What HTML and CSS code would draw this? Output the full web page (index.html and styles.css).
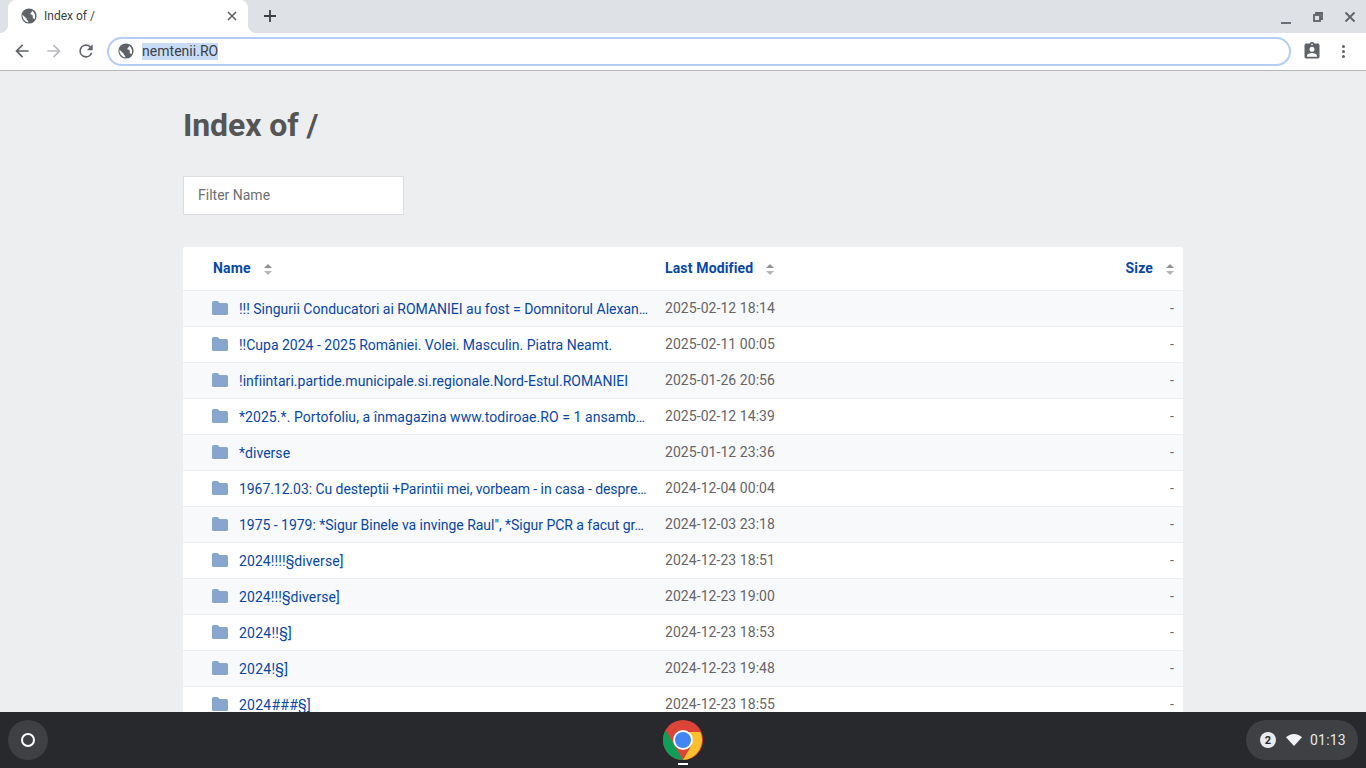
FILE: index.html
```html
<!DOCTYPE html>
<html lang="en">
<head>
<meta charset="utf-8">
<title>Index of /</title>
<link rel="stylesheet" href="styles.css">
</head>
<body>
<div class="browser">
  <div class="tabstrip">
    <div class="tab">
      <svg class="favicon" viewBox="1.500 1.500 21 21"><path fill-rule="evenodd" d="M12 2a10 10 0 1 0 0 20 10 10 0 0 0 0-20zM3.500 10.500L9 15.500V17l2 1.500v2A9 9 0 0 1 3.500 10.500zM16 5a9 9 0 0 1 3 11.500c-.5-1-1-1.500-2-1.500v-3c0-1-1-2-2-2h-1V8c1 0 2-1.500 2-3z"/></svg>
      <span class="tab-title">Index of /</span>
      <svg class="tab-close" viewBox="0 0 10 10"><path d="M1 1l8 8M9 1l-8 8"/></svg>
    </div>
    <svg class="new-tab" viewBox="0 0 12 12"><path d="M6 0v12M0 6h12"/></svg>
    <div class="window-controls">
      <svg class="win-min" viewBox="0 0 10 10"><path d="M0 9h10"/></svg>
      <svg class="win-restore" viewBox="0 0 10 10"><path d="M3 3V1h6v6H7"/><rect x="1" y="3" width="6" height="6"/></svg>
      <svg class="win-close" viewBox="0 0 10 10"><path d="M.5.5l9 9M9.500.5l-9 9"/></svg>
    </div>
  </div>
  <div class="toolbar">
    <svg class="nav" viewBox="0 0 24 24"><path d="M20 11H7.830l5.590-5.590L12 4l-8 8 8 8 1.410-1.410L7.830 13H20v-2z"/></svg>
    <svg class="nav nav-off" viewBox="0 0 24 24"><path d="M12 4l-1.410 1.410L16.170 11H4v2h12.170l-5.580 5.590L12 20l8-8z"/></svg>
    <svg class="nav" viewBox="0 0 24 24"><path d="M17.650 6.350A7.960 7.960 0 0 0 12 4a8 8 0 1 0 7.730 10h-2.080A6 6 0 1 1 12 6c1.660 0 3.140.69 4.220 1.780L13 11h7V4l-2.350 2.350z"/></svg>
    <div class="omnibox">
      <svg class="favicon" viewBox="1.500 1.500 21 21"><path fill-rule="evenodd" d="M12 2a10 10 0 1 0 0 20 10 10 0 0 0 0-20zM3.500 10.500L9 15.500V17l2 1.500v2A9 9 0 0 1 3.500 10.500zM16 5a9 9 0 0 1 3 11.500c-.5-1-1-1.500-2-1.500v-3c0-1-1-2-2-2h-1V8c1 0 2-1.500 2-3z"/></svg>
      <span class="url">nemtenii.RO</span>
    </div>
    <svg class="ext" viewBox="0 0 24 24"><path d="M19 3h-4.180A3 3 0 0 0 12 1a3 3 0 0 0-2.820 2H5a2 2 0 0 0-2 2v14c0 1.100.9 2 2 2h14a2 2 0 0 0 2-2V5a2 2 0 0 0-2-2zm-7 0a1 1 0 1 1 0 2 1 1 0 0 1 0-2zm0 4a3 3 0 1 1 0 6 3 3 0 0 1 0-6zm6 12H6v-1.400c0-2 4-3.100 6-3.100s6 1.100 6 3.100V19z"/></svg>
    <div class="menu-dots"><i></i><i></i><i></i></div>
  </div>
  <main class="page">
    <div class="content">
      <h1 class="title">Index of /</h1>
      <input class="filter" type="text" placeholder="Filter Name">
      <div class="listing">
        <div class="row head">
          <div class="c-name"><a class="sort">Name</a><span class="arrows"></span></div>
          <div class="c-date"><a class="sort">Last Modified</a><span class="arrows"></span></div>
          <div class="c-size"><a class="sort">Size</a><span class="arrows"></span></div>
        </div>
        <div class="row odd"><div class="c-name"><svg class="folder" viewBox="0 0 16 14"><path d="M1.500 0h4.200l1.800 2h7a1.500 1.500 0 0 1 1.500 1.500v9a1.500 1.500 0 0 1-1.500 1.500h-13A1.500 1.500 0 0 1 0 12.500v-11A1.500 1.500 0 0 1 1.500 0z"/></svg><a class="name fit-plain">!!! Singurii Conducatori ai ROMANIEI au fost = Domnitorul Alexan…</a></div><div class="c-date"><span class="cell">2025-02-12 18:14</span></div><div class="c-size"><span class="cell">-</span></div></div>
        <div class="row"><div class="c-name"><svg class="folder" viewBox="0 0 16 14"><path d="M1.500 0h4.200l1.800 2h7a1.500 1.500 0 0 1 1.500 1.500v9a1.500 1.500 0 0 1-1.500 1.500h-13A1.500 1.500 0 0 1 0 12.500v-11A1.500 1.500 0 0 1 1.500 0z"/></svg><a class="name fit-plain">!!Cupa 2024 - 2025 României. Volei. Masculin. Piatra Neamt.</a></div><div class="c-date"><span class="cell">2025-02-11 00:05</span></div><div class="c-size"><span class="cell">-</span></div></div>
        <div class="row odd"><div class="c-name"><svg class="folder" viewBox="0 0 16 14"><path d="M1.500 0h4.200l1.800 2h7a1.500 1.500 0 0 1 1.500 1.500v9a1.500 1.500 0 0 1-1.500 1.500h-13A1.500 1.500 0 0 1 0 12.500v-11A1.500 1.500 0 0 1 1.500 0z"/></svg><a class="name">!infiintari.partide.municipale.si.regionale.Nord-Estul.ROMANIEI</a></div><div class="c-date"><span class="cell">2025-01-26 20:56</span></div><div class="c-size"><span class="cell">-</span></div></div>
        <div class="row"><div class="c-name"><svg class="folder" viewBox="0 0 16 14"><path d="M1.500 0h4.200l1.800 2h7a1.500 1.500 0 0 1 1.500 1.500v9a1.500 1.500 0 0 1-1.500 1.500h-13A1.500 1.500 0 0 1 0 12.500v-11A1.500 1.500 0 0 1 1.500 0z"/></svg><a class="name fit-wide">*2025.*. Portofoliu, a înmagazina www.todiroae.RO = 1 ansamb…</a></div><div class="c-date"><span class="cell">2025-02-12 14:39</span></div><div class="c-size"><span class="cell">-</span></div></div>
        <div class="row odd"><div class="c-name"><svg class="folder" viewBox="0 0 16 14"><path d="M1.500 0h4.200l1.800 2h7a1.500 1.500 0 0 1 1.500 1.500v9a1.500 1.500 0 0 1-1.500 1.500h-13A1.500 1.500 0 0 1 0 12.500v-11A1.500 1.500 0 0 1 1.500 0z"/></svg><a class="name">*diverse</a></div><div class="c-date"><span class="cell">2025-01-12 23:36</span></div><div class="c-size"><span class="cell">-</span></div></div>
        <div class="row"><div class="c-name"><svg class="folder" viewBox="0 0 16 14"><path d="M1.500 0h4.200l1.800 2h7a1.500 1.500 0 0 1 1.500 1.500v9a1.500 1.500 0 0 1-1.500 1.500h-13A1.500 1.500 0 0 1 0 12.500v-11A1.500 1.500 0 0 1 1.500 0z"/></svg><a class="name fit-tight">1967.12.03: Cu desteptii +Parintii mei, vorbeam - in casa - despre…</a></div><div class="c-date"><span class="cell">2024-12-04 00:04</span></div><div class="c-size"><span class="cell">-</span></div></div>
        <div class="row odd"><div class="c-name"><svg class="folder" viewBox="0 0 16 14"><path d="M1.500 0h4.200l1.800 2h7a1.500 1.500 0 0 1 1.500 1.500v9a1.500 1.500 0 0 1-1.500 1.500h-13A1.500 1.500 0 0 1 0 12.500v-11A1.500 1.500 0 0 1 1.500 0z"/></svg><a class="name fit-snug">1975 - 1979: *Sigur Binele va invinge Raul", *Sigur PCR a facut gr…</a></div><div class="c-date"><span class="cell">2024-12-03 23:18</span></div><div class="c-size"><span class="cell">-</span></div></div>
        <div class="row"><div class="c-name"><svg class="folder" viewBox="0 0 16 14"><path d="M1.500 0h4.200l1.800 2h7a1.500 1.500 0 0 1 1.500 1.500v9a1.500 1.500 0 0 1-1.500 1.500h-13A1.500 1.500 0 0 1 0 12.500v-11A1.500 1.500 0 0 1 1.500 0z"/></svg><a class="name fit-short">2024!!!!§diverse]</a></div><div class="c-date"><span class="cell">2024-12-23 18:51</span></div><div class="c-size"><span class="cell">-</span></div></div>
        <div class="row odd"><div class="c-name"><svg class="folder" viewBox="0 0 16 14"><path d="M1.500 0h4.200l1.800 2h7a1.500 1.500 0 0 1 1.500 1.500v9a1.500 1.500 0 0 1-1.500 1.500h-13A1.500 1.500 0 0 1 0 12.500v-11A1.500 1.500 0 0 1 1.500 0z"/></svg><a class="name fit-short">2024!!!§diverse]</a></div><div class="c-date"><span class="cell">2024-12-23 19:00</span></div><div class="c-size"><span class="cell">-</span></div></div>
        <div class="row"><div class="c-name"><svg class="folder" viewBox="0 0 16 14"><path d="M1.500 0h4.200l1.800 2h7a1.500 1.500 0 0 1 1.500 1.500v9a1.500 1.500 0 0 1-1.500 1.500h-13A1.500 1.500 0 0 1 0 12.500v-11A1.500 1.500 0 0 1 1.500 0z"/></svg><a class="name fit-tiny">2024!!§]</a></div><div class="c-date"><span class="cell">2024-12-23 18:53</span></div><div class="c-size"><span class="cell">-</span></div></div>
        <div class="row odd"><div class="c-name"><svg class="folder" viewBox="0 0 16 14"><path d="M1.500 0h4.200l1.800 2h7a1.500 1.500 0 0 1 1.500 1.500v9a1.500 1.500 0 0 1-1.500 1.500h-13A1.500 1.500 0 0 1 0 12.500v-11A1.500 1.500 0 0 1 1.500 0z"/></svg><a class="name fit-tiny">2024!§]</a></div><div class="c-date"><span class="cell">2024-12-23 19:48</span></div><div class="c-size"><span class="cell">-</span></div></div>
        <div class="row"><div class="c-name"><svg class="folder" viewBox="0 0 16 14"><path d="M1.500 0h4.200l1.800 2h7a1.500 1.500 0 0 1 1.500 1.500v9a1.500 1.500 0 0 1-1.500 1.500h-13A1.500 1.500 0 0 1 0 12.500v-11A1.500 1.500 0 0 1 1.500 0z"/></svg><a class="name fit-tiny">2024###§]</a></div><div class="c-date"><span class="cell">2024-12-23 18:55</span></div><div class="c-size"><span class="cell">-</span></div></div>
      </div>
    </div>
  </main>
  <footer class="shelf">
    <div class="launcher"><span class="launcher-ring"></span></div>
    <div class="shelf-center">
      <svg class="chrome" viewBox="0 0 40 40">
        <circle cx="20" cy="20" r="20" fill="#db4437"/>
        <path d="M20 40A20 20 0 0 1 2.680 10L11.340 25 20 40z" fill="#0f9d58"/>
        <path d="M20 12h17.320A20 20 0 0 1 20 40l8.660-15A10 10 0 0 0 20 12z" fill="#fbc02d"/>
        <circle cx="20" cy="20" r="10" fill="#fff"/>
        <circle cx="20" cy="20" r="8" fill="#4285f4"/>
      </svg>
      <span class="active-dot"></span>
    </div>
    <div class="tray">
      <span class="badge">2</span>
      <svg class="wifi" viewBox="0 0 16 12"><path d="M8 12L0 3.200C2 1.300 4.800 0 8 0s6 1.300 8 3.200z"/></svg>
      <span class="clock">01:13</span>
    </div>
  </footer>
</div>
</body>
</html>
```
FILE: styles.css
```css
* { box-sizing: border-box; }
html, body { margin: 0; padding: 0; height: 100%; overflow: hidden; }
body { font-family: Roboto, "Liberation Sans", sans-serif; }
.browser { display: flex; flex-direction: column; height: 768px; width: 1366px; background: #eceef0; }

.tabstrip { height: 33px; flex: none; background: #dee1e6; display: flex; align-items: center; }
.tab { position: relative; width: 240px; height: 33px; margin: 0 0 0 8px; background: #fff; border-radius: 8px 8px 0 0; display: flex; align-items: center; padding: 0 0 2px 13px; }
.tab::before, .tab::after { content: ""; position: absolute; bottom: 0; width: 8px; height: 8px; }
.tab::before { left: -8px; background: radial-gradient(circle at 0 0, #dee1e6 7.5px, #fff 8.5px); }
.tab::after { right: -8px; background: radial-gradient(circle at 100% 0, #dee1e6 7.5px, #fff 8.5px); }
.favicon { width: 16px; height: 16px; fill: #5f6368; flex: none; }
.tab-title { font-size: 12px; color: #3c4043; margin-left: 7px; flex: 1; }
.tab-close { width: 10px; height: 10px; fill: none; stroke: #5f6368; stroke-width: 1.600; margin-right: 11px; }
.new-tab { width: 12px; height: 12px; fill: none; stroke: #3c4043; stroke-width: 1.800; margin-left: 16px; margin-bottom: 1px; }
.window-controls { margin-left: auto; display: flex; align-items: center; gap: 22px; padding-right: 11px; }
.window-controls svg { width: 10px; height: 10px; fill: none; stroke: #5f6368; stroke-width: 1.800; overflow: visible; }
.win-min { margin-top: 5px; }
.win-restore { stroke-width: 2px; }

.toolbar { height: 38px; flex: none; background: #fff; border-bottom: 1px solid #b4b5b7; display: flex; align-items: center; padding: 0 0 1px 12px; }
.nav { width: 20px; height: 20px; fill: #5f6368; flex: none; margin-right: 12px; }
.nav-off { fill: #b9bbbe; }
.omnibox { width: 1184px; height: 29px; margin-left: -1px; border: 2px solid #b3cdf6; border-radius: 15px; background: #fff; display: flex; align-items: center; padding-left: 9px; }
.url { font-size: 14px; color: #3c4043; background: #c8dcf8; margin-left: 8px; line-height: 16px; padding: 0 0 1px 0; letter-spacing: .03px; }
.ext { width: 20px; height: 20px; fill: #5f6368; margin-left: 11px; flex: none; }
.menu-dots { display: flex; flex-direction: column; gap: 2px; margin-left: 20px; }
.menu-dots i { width: 3px; height: 3px; border-radius: 50%; background: #5f6368; display: block; }

.page { flex: 1; min-height: 0; overflow: hidden; display: flex; justify-content: center; }
.content { width: 1000px; }
.title { margin: 36px 0 0; font-size: 32px; line-height: 36px; font-weight: 700; color: #555; letter-spacing: -.1px; }
.filter { display: block; width: 221px; height: 39px; margin-top: 33px; padding: 0 14px 2px; border: 1px solid #dbdde0; background: #fff; font: 14px Roboto, sans-serif; color: #555; outline: none; border-radius: 0; }
.filter::placeholder { color: #6c6f72; opacity: 1; }

.listing { margin-top: 32px; background: #fff; border-radius: 2px 2px 0 0; }
.row { display: grid; grid-template-columns: 482px 1fr 120px; height: 36px; align-items: center; border-bottom: 1px solid #eceef0; font-size: 14px; color: #666; }
.row.head { height: 44px; }
.row.odd { background: #f8f9fb; }
.c-name { display: flex; align-items: center; padding-left: 29px; min-width: 0; }
.c-date { display: flex; align-items: center; }
.c-size { display: flex; align-items: center; justify-content: flex-end; padding-right: 9px; }
.head .c-name { padding-left: 30px; }
.sort { color: #0747a6; font-weight: 700; font-size: 14px; letter-spacing: .15px; margin-bottom: 2px; }
.arrows { position: relative; display: block; width: 8px; height: 11px; margin-left: 13px; margin-top: 2px; flex: none; }
.arrows::before, .arrows::after { content: ""; position: absolute; left: 0; border-left: 4px solid transparent; border-right: 4px solid transparent; }
.arrows::before { top: 0; border-bottom: 4px solid #8f9194; }
.arrows::after { bottom: 0; border-top: 4px solid #b4b6b8; }
.folder { width: 16px; height: 14px; fill: #88a5cd; flex: none; margin-right: 11px; margin-top: -2px; }
.name { color: #0747a6; white-space: nowrap; letter-spacing: .03px; }
.fit-plain { letter-spacing: 0; }
.fit-wide { letter-spacing: .06px; }
.fit-snug { letter-spacing: -.03px; }
.fit-tight { letter-spacing: -.06px; }
.fit-short { letter-spacing: .09px; }
.fit-tiny { letter-spacing: .25px; }
.cell { margin-bottom: 2px; letter-spacing: .06px; }

.shelf { height: 56px; flex: none; background: #27292d; display: flex; align-items: center; position: relative; justify-content: space-between; padding: 0 8px; }
.launcher { width: 40px; height: 40px; border-radius: 50%; background: #3e4043; display: flex; align-items: center; justify-content: center; }
.launcher-ring { width: 14px; height: 14px; border: 2px solid #fff; border-radius: 50%; }
.shelf-center { position: absolute; left: 663px; top: 8px; width: 40px; height: 48px; }
.chrome { width: 40px; height: 40px; display: block; }
.active-dot { position: absolute; left: 15px; top: 43px; width: 10px; height: 2px; background: #fff; }
.tray { width: 112px; height: 40px; border-radius: 20px; background: #3e4043; display: flex; align-items: center; padding-left: 14px; }
.badge { width: 16px; height: 16px; border-radius: 50%; background: #e8eaed; color: #27292d; font-size: 11px; font-weight: 700; display: flex; align-items: center; justify-content: center; }
.wifi { width: 16px; height: 12px; fill: #f1f3f4; margin-left: 10px; }
.clock { color: #e8eaed; font-size: 14px; margin-left: 8px; letter-spacing: .2px; }
```
